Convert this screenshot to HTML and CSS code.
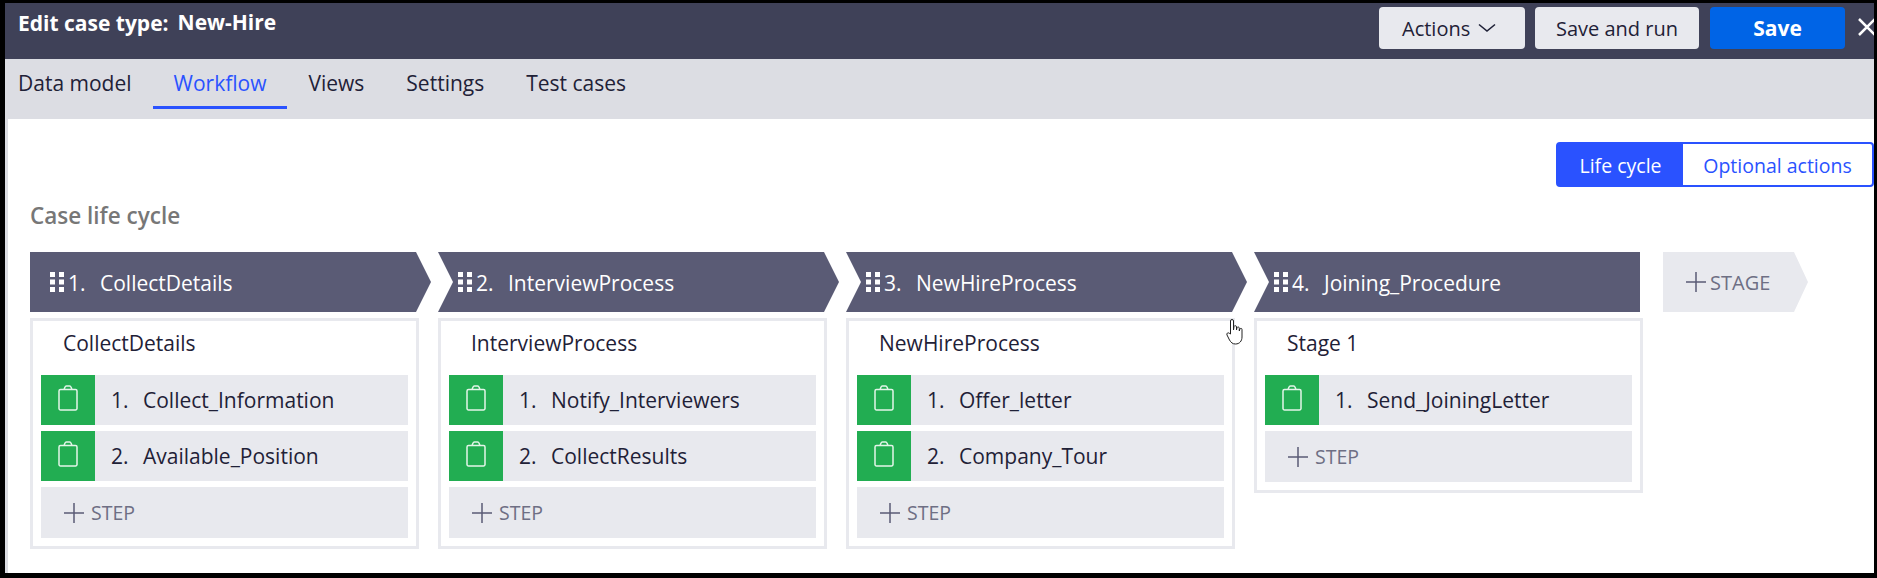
FILE: index.html
```html
<!DOCTYPE html>
<html lang="en">
<head>
<meta charset="UTF-8" />
<title>Edit case type</title>
<link rel="stylesheet" href="styles.css">
</head>
<body>
<div class="frame">
  <header class="topbar">
    <h1 class="topbar-title"><span>Edit case type:</span><span class="case-name">New-Hire</span></h1>
    <div class="topbar-actions">
      <button type="button" class="btn btn-actions">Actions
        <svg class="chevron" viewBox="0 0 18 10" aria-hidden="true"><path d="M1 1.500 9 8l8-6.500" /></svg>
      </button>
      <button type="button" class="btn btn-run">Save and run</button>
      <button type="button" class="btn btn-save">Save</button>
      <svg class="close" viewBox="0 0 18 18" aria-hidden="true"><path d="M1 1 17 17M17 1 1 17" /></svg>
    </div>
  </header>

  <nav class="tabs">
    <a class="tab">Data model</a>
    <a class="tab tab-active">Workflow</a>
    <a class="tab">Views</a>
    <a class="tab">Settings</a>
    <a class="tab">Test cases</a>
  </nav>

  <main class="content">
    <div class="toggle">
      <span class="toggle-item toggle-on">Life cycle</span>
      <span class="toggle-item">Optional actions</span>
    </div>
    <h2 class="section-title">Case life cycle</h2>

    <div class="stages">
      <section class="stage stage-first">
        <div class="stage-head">
          <svg class="grip" viewBox="0 0 14 20" aria-hidden="true"><path d="M0 0h5v5H0zM9 0h5v5H9zM0 7.500h5v5H0zM9 7.500h5v5H9zM0 15h5v5H0zM9 15h5v5H9z" /></svg>
          <span class="stage-num">1.</span>CollectDetails
        </div>
        <div class="panel">
          <div class="panel-title">CollectDetails</div>
          <div class="step">
            <span class="step-icon"><svg viewBox="0 0 20 26" aria-hidden="true"><path d="M6 4.500H2.500a1.500 1.500 0 0 0-1.500 1.500v17.500a1.500 1.500 0 0 0 1.500 1.500h15a1.500 1.500 0 0 0 1.500-1.500V6a1.500 1.500 0 0 0-1.500-1.500H14L13 2a1.500 1.500 0 0 0-1.400-1H8.400A1.500 1.500 0 0 0 7 2zh8" /></svg></span>
            <span class="step-num">1.</span>Collect_Information
          </div>
          <div class="step">
            <span class="step-icon"><svg viewBox="0 0 20 26" aria-hidden="true"><path d="M6 4.500H2.500a1.500 1.500 0 0 0-1.500 1.500v17.500a1.500 1.500 0 0 0 1.500 1.500h15a1.500 1.500 0 0 0 1.500-1.500V6a1.500 1.500 0 0 0-1.500-1.500H14L13 2a1.500 1.500 0 0 0-1.400-1H8.400A1.500 1.500 0 0 0 7 2zh8" /></svg></span>
            <span class="step-num">2.</span>Available_Position
          </div>
          <div class="add-step">
            <svg class="plus" viewBox="0 0 20 20" aria-hidden="true"><path d="M10 0v20M0 10h20" /></svg>STEP
          </div>
        </div>
      </section>

      <section class="stage">
        <div class="stage-head">
          <svg class="grip" viewBox="0 0 14 20" aria-hidden="true"><path d="M0 0h5v5H0zM9 0h5v5H9zM0 7.500h5v5H0zM9 7.500h5v5H9zM0 15h5v5H0zM9 15h5v5H9z" /></svg>
          <span class="stage-num">2.</span>InterviewProcess
        </div>
        <div class="panel">
          <div class="panel-title">InterviewProcess</div>
          <div class="step">
            <span class="step-icon"><svg viewBox="0 0 20 26" aria-hidden="true"><path d="M6 4.500H2.500a1.500 1.500 0 0 0-1.500 1.500v17.500a1.500 1.500 0 0 0 1.500 1.500h15a1.500 1.500 0 0 0 1.500-1.500V6a1.500 1.500 0 0 0-1.500-1.500H14L13 2a1.500 1.500 0 0 0-1.400-1H8.400A1.500 1.500 0 0 0 7 2zh8" /></svg></span>
            <span class="step-num">1.</span>Notify_Interviewers
          </div>
          <div class="step">
            <span class="step-icon"><svg viewBox="0 0 20 26" aria-hidden="true"><path d="M6 4.500H2.500a1.500 1.500 0 0 0-1.500 1.500v17.500a1.500 1.500 0 0 0 1.500 1.500h15a1.500 1.500 0 0 0 1.500-1.500V6a1.500 1.500 0 0 0-1.500-1.500H14L13 2a1.500 1.500 0 0 0-1.400-1H8.400A1.500 1.500 0 0 0 7 2zh8" /></svg></span>
            <span class="step-num">2.</span>CollectResults
          </div>
          <div class="add-step">
            <svg class="plus" viewBox="0 0 20 20" aria-hidden="true"><path d="M10 0v20M0 10h20" /></svg>STEP
          </div>
        </div>
      </section>

      <section class="stage">
        <div class="stage-head">
          <svg class="grip" viewBox="0 0 14 20" aria-hidden="true"><path d="M0 0h5v5H0zM9 0h5v5H9zM0 7.500h5v5H0zM9 7.500h5v5H9zM0 15h5v5H0zM9 15h5v5H9z" /></svg>
          <span class="stage-num">3.</span>NewHireProcess
        </div>
        <div class="panel">
          <div class="panel-title">NewHireProcess</div>
          <div class="step">
            <span class="step-icon"><svg viewBox="0 0 20 26" aria-hidden="true"><path d="M6 4.500H2.500a1.500 1.500 0 0 0-1.500 1.500v17.500a1.500 1.500 0 0 0 1.500 1.500h15a1.500 1.500 0 0 0 1.500-1.500V6a1.500 1.500 0 0 0-1.500-1.500H14L13 2a1.500 1.500 0 0 0-1.400-1H8.400A1.500 1.500 0 0 0 7 2zh8" /></svg></span>
            <span class="step-num">1.</span>Offer_letter
          </div>
          <div class="step">
            <span class="step-icon"><svg viewBox="0 0 20 26" aria-hidden="true"><path d="M6 4.500H2.500a1.500 1.500 0 0 0-1.500 1.500v17.500a1.500 1.500 0 0 0 1.500 1.500h15a1.500 1.500 0 0 0 1.500-1.500V6a1.500 1.500 0 0 0-1.500-1.500H14L13 2a1.500 1.500 0 0 0-1.400-1H8.400A1.500 1.500 0 0 0 7 2zh8" /></svg></span>
            <span class="step-num">2.</span>Company_Tour
          </div>
          <div class="add-step">
            <svg class="plus" viewBox="0 0 20 20" aria-hidden="true"><path d="M10 0v20M0 10h20" /></svg>STEP
          </div>
        </div>
      </section>

      <section class="stage stage-last">
        <div class="stage-head">
          <svg class="grip" viewBox="0 0 14 20" aria-hidden="true"><path d="M0 0h5v5H0zM9 0h5v5H9zM0 7.500h5v5H0zM9 7.500h5v5H9zM0 15h5v5H0zM9 15h5v5H9z" /></svg>
          <span class="stage-num">4.</span>Joining_Procedure
        </div>
        <div class="panel">
          <div class="panel-title">Stage 1</div>
          <div class="step">
            <span class="step-icon"><svg viewBox="0 0 20 26" aria-hidden="true"><path d="M6 4.500H2.500a1.500 1.500 0 0 0-1.500 1.500v17.500a1.500 1.500 0 0 0 1.500 1.500h15a1.500 1.500 0 0 0 1.500-1.500V6a1.500 1.500 0 0 0-1.500-1.500H14L13 2a1.500 1.500 0 0 0-1.400-1H8.400A1.500 1.500 0 0 0 7 2zh8" /></svg></span>
            <span class="step-num">1.</span>Send_JoiningLetter
          </div>
          <div class="add-step">
            <svg class="plus" viewBox="0 0 20 20" aria-hidden="true"><path d="M10 0v20M0 10h20" /></svg>STEP
          </div>
        </div>
      </section>

      <div class="add-stage">
        <svg class="plus" viewBox="0 0 20 20" aria-hidden="true"><path d="M10 0v20M0 10h20" /></svg>STAGE
      </div>
    </div>

    <!-- mouse pointer caught in the screenshot -->
    <svg class="pointer" viewBox="0 0 18 26" aria-hidden="true"><path d="M4.500 15V2a1.500 1.500 0 0 1 3 0v9l.5-3.500a1.300 1.300 0 0 1 2.500.5V11l.5-2.300a1.200 1.200 0 0 1 2.300.5V12l.6-2a1.100 1.100 0 0 1 2.100.5V18c0 4-2.500 7-6.500 7-3 0-4.500-1.500-6-4L1 16c-.8-1.500 1-3 2.300-1.700z" /></svg>
  </main>
</div>
</body>
</html>
```

FILE: styles.css
```css
/* --- RESET --- */
*, *::before, *::after {
  box-sizing: border-box;
}
html, body {
  margin: 0;
  height: 578px;
  overflow: hidden;
  background: #000;
}
body {
  font-family: 'Open Sans', 'Noto Sans', sans-serif;
  color: #1f2137;
}
.frame {
  display: flex;
  flex-direction: column;
  height: 570px;
  margin: 3px 3px 0 5px;
  background: #dcdde3;
}

/* --- TOP BAR --- */
.topbar {
  display: flex;
  flex: none;
  justify-content: space-between;
  height: 56px;
  padding: 4px 0 0 13px;
  overflow: hidden;
  background: #3f4158;
}
.topbar-title {
  display: flex;
  gap: 9px;
  height: 33px;
  margin: 0;
  font-size: 21px;
  font-weight: 700;
  line-height: 33px;
  color: #fff;
}
.case-name {
  margin-top: -1px;
}
.topbar-actions {
  display: flex;
  align-items: flex-start;
}
.btn {
  flex: none;
  height: 42px;
  margin-right: 11px;
  padding: 0;
  border: none;
  border-radius: 4px;
  background: #e8e9ee;
  color: #1f2137;
  font: 400 20px 'Open Sans', sans-serif;
}
.btn-actions {
  width: 146px;
  margin-right: 10px;
  padding-left: 23px;
  text-align: left;
}
.btn-run { width: 164px; }
.btn-save {
  width: 135px;
  margin-right: 13px;
  background: #0064e6;
  color: #fff;
  font-size: 21px;
  font-weight: 700;
}
.chevron {
  width: 18px;
  height: 10px;
  margin-left: 3px;
  vertical-align: 3px;
  fill: none;
  stroke: #1f2137;
  stroke-width: 1.600;
}
.close {
  flex: none;
  width: 18px;
  height: 18px;
  margin: 11px -2px 0 0;
  fill: none;
  stroke: #fff;
  stroke-width: 2.500;
}

/* --- TABS --- */
.tabs {
  display: flex;
  flex: none;
  height: 60px;
}
.tab {
  height: 50px;
  padding: 0 21px;
  font-size: 21px;
  line-height: 48px;
}
.tab:first-child {
  padding-left: 13px;
}
.tab-active {
  color: #2a52ff;
  border-bottom: 3px solid #2a52ff;
}

/* --- CONTENT --- */
.content {
  position: relative;
  flex: 1;
  margin-left: 3px;
  padding: 23px 0 0 22px;
  background: #fff;
}
.toggle {
  display: flex;
  width: 318px;
  height: 45px;
  margin-left: auto;
  border: 2px solid #2a52ff;
  border-radius: 4px;
  font-size: 19.500px;
  line-height: 44px;
  color: #2a52ff;
}
.toggle-item {
  flex: 1;
  text-align: center;
}
.toggle-on {
  flex: 0 0 125px;
  background: #2a52ff;
  color: #fff;
}
.section-title {
  height: 53px;
  margin: 12px 0 0;
  font-size: 22.500px;
  font-weight: 600;
  line-height: 34px;
  color: #777;
}

/* --- STAGES --- */
.stages {
  display: flex;
  align-items: flex-start;
  gap: 19px;
}
.stage {
  flex: none;
  width: 389px;
}
.stage-head {
  display: flex;
  align-items: center;
  width: 401px;
  height: 60px;
  margin-bottom: 6px;
  padding: 2px 0 0 20px;
  background: #5a5b75;
  color: #fff;
  font-size: 21px;
  clip-path: polygon(0 0, 386px 0, 100% 50%, 386px 100%, 0 100%, 15px 50%);
}
.stage-first .stage-head {
  clip-path: polygon(0 0, 386px 0, 100% 50%, 386px 100%, 0 100%);
}
.stage-last .stage-head {
  width: 386px;
  clip-path: polygon(0 0, 100% 0, 100% 100%, 0 100%, 15px 50%);
}
.grip {
  width: 14px;
  height: 20px;
  margin: -2px 4px 0 0;
  fill: #fff;
}
.stage-num {
  display: inline-block;
  width: 32px;
}
.panel {
  padding: 0 8px 8px;
  border: 3px solid #e8e9ee;
}
.panel-title {
  height: 54px;
  padding-left: 22px;
  font-size: 21px;
  line-height: 44px;
}
.step {
  display: flex;
  align-items: center;
  height: 50px;
  margin-bottom: 6px;
  background: #e8e9ee;
  font-size: 21px;
}
.step-icon {
  display: flex;
  align-items: center;
  justify-content: center;
  width: 54px;
  height: 50px;
  margin-right: 16px;
  padding-bottom: 5px;
  background: #22ad52;
}
.step-icon svg {
  width: 20px;
  height: 26px;
  fill: none;
  stroke: #e3f5e9;
  stroke-width: 1.500;
}
.step-num {
  display: inline-block;
  width: 32px;
}
.add-step {
  display: flex;
  align-items: center;
  height: 51px;
  padding-left: 23px;
  background: #e8e9ee;
  color: #6e6f84;
  font-size: 19.500px;
}
.plus {
  width: 20px;
  height: 20px;
  margin-right: 7px;
  fill: none;
  stroke: #5a5b75;
  stroke-width: 1.500;
}
.add-stage {
  display: flex;
  align-items: center;
  flex: none;
  width: 145px;
  height: 60px;
  margin-left: 1px;
  padding-left: 23px;
  background: #e8e9ee;
  color: #6e6f84;
  font-size: 20px;
  clip-path: polygon(0 0, 131px 0, 100% 50%, 131px 100%, 0 100%);
}
.add-stage .plus {
  margin-right: 4px;
}
.pointer {
  position: absolute;
  left: 1218px;
  top: 200px;
  width: 18px;
  height: 26px;
  fill: #fff;
  stroke: #222;
  stroke-width: 1;
}
```
